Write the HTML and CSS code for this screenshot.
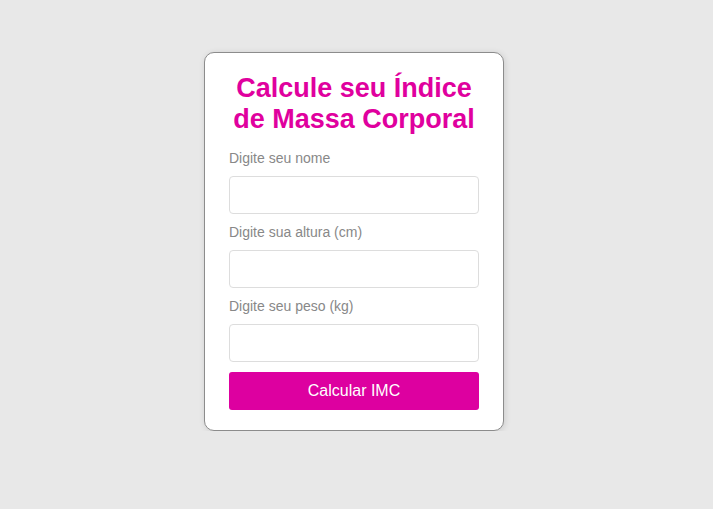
FILE: index.html
```html
<!DOCTYPE html>
<html lang="pt-BR">
<head>
<meta charset="utf-8">
<title>Calculadora IMC</title>
<link rel="stylesheet" href="styles.css">
</head>
<body>
<main class="page">
  <form class="card">
    <h1 class="title">Calcule seu Índice de Massa Corporal</h1>
    <label class="label" for="nome">Digite seu nome</label>
    <input class="field" id="nome" type="text">
    <label class="label" for="altura">Digite sua altura (cm)</label>
    <input class="field" id="altura" type="text">
    <label class="label" for="peso">Digite seu peso (kg)</label>
    <input class="field" id="peso" type="text">
    <button class="btn" type="button">Calcular IMC</button>
  </form>
</main>
</body>
</html>
```
FILE: styles.css
```css
html, body {
  margin: 0;
  padding: 0;
  background: #e8e8e8;
  font-family: "Liberation Sans", Arial, sans-serif;
}
.page {
  display: flex;
  justify-content: center;
  padding: 52px 5px 0 0;
}
.card {
  width: 250px;
  padding: 20px 24px 20px;
  background: #fff;
  border: 1px solid #8c8c8c;
  border-radius: 10px;
  box-shadow: 1px 1px 6px rgba(0, 0, 0, 0.12);
  display: flex;
  flex-direction: column;
}
.title {
  margin: 0 0 15px;
  font-size: 27px;
  line-height: 31px;
  font-weight: bold;
  color: #e0009e;
  text-align: center;
}
.label {
  display: block;
  font-size: 14px;
  line-height: 16px;
  color: #888;
  margin-bottom: 10px;
}
.field {
  box-sizing: border-box;
  height: 38px;
  width: 100%;
  margin: 0 0 10px;
  border: 1px solid #ddd;
  border-radius: 4px;
  background: #fff;
  font: inherit;
}
.btn {
  height: 38px;
  border: none;
  border-radius: 3px;
  background: #dd00a0;
  color: #fff;
  font-family: inherit;
  font-size: 16px;
  cursor: pointer;
}
```
